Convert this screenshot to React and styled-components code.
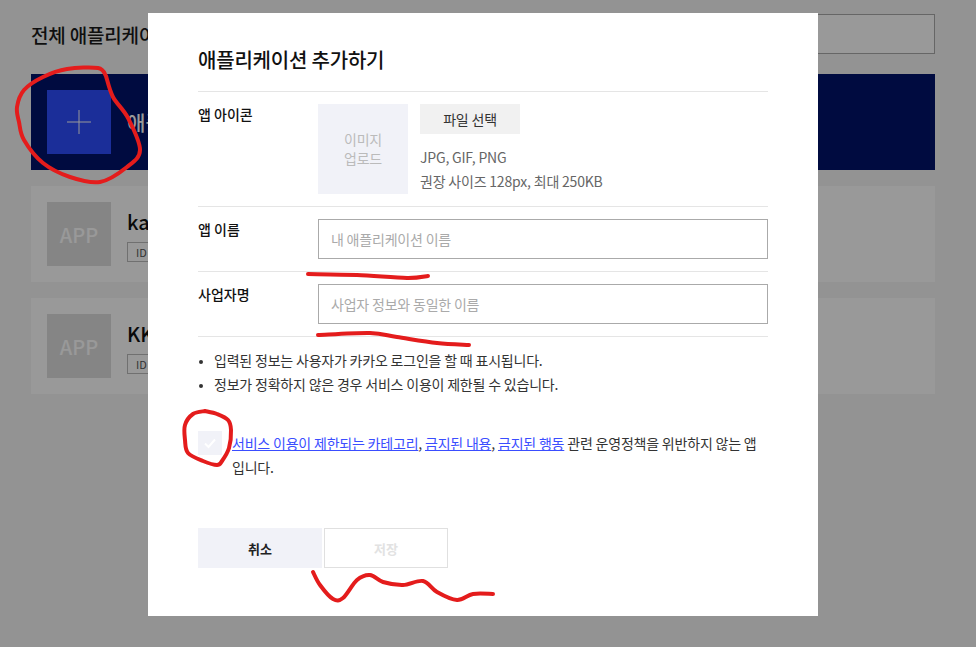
import React from "react";
import styled, { createGlobalStyle } from "styled-components";

const GlobalStyle = createGlobalStyle`
	html, body {
		margin: 0;
		padding: 0;
		height: 100%;
		background: #f5f6f5;
		font-family: "Noto Sans CJK KR", "Noto Sans", sans-serif;
		overflow: hidden;
	}
	* {
		box-sizing: border-box;
	}
`;

// hand-drawn marks on top of the screenshot, as point lists
const marks = [
	[[106, 76], [98, 68], [67, 69], [43, 77], [24, 90], [17, 107], [19, 122], [24, 140], [43, 163], [70, 177], [100, 182], [127, 167], [140, 150], [128, 118], [113, 97], [106, 76]],
	[[308, 274], [357, 275], [407, 278], [428, 276]],
	[[318, 335], [370, 333], [397, 337], [437, 343], [469, 345]],
	[[205, 411], [193, 414], [185, 425], [185, 440], [188, 453], [203, 461], [217, 465], [222, 461], [229, 448], [231, 430], [228, 420], [217, 414], [205, 411]],
	[[313, 572], [320, 585], [333, 599], [343, 598], [357, 580], [370, 575], [383, 582], [403, 585], [423, 581], [437, 592], [457, 600], [473, 594], [493, 594]],
];

// catmull-rom through the points, so the line passes where the marker went
const toPath = (pts) => {
	let d = `M${pts[0][0]} ${pts[0][1]}`;
	for (let i = 0; i < pts.length - 1; i++) {
		const p0 = pts[Math.max(i - 1, 0)];
		const p1 = pts[i];
		const p2 = pts[i + 1];
		const p3 = pts[Math.min(i + 2, pts.length - 1)];
		const c1x = p1[0] + (p2[0] - p0[0]) / 6;
		const c1y = p1[1] + (p2[1] - p0[1]) / 6;
		const c2x = p2[0] - (p3[0] - p1[0]) / 6;
		const c2y = p2[1] - (p3[1] - p1[1]) / 6;
		d += ` C${c1x} ${c1y} ${c2x} ${c2y} ${p2[0]} ${p2[1]}`;
	}
	return d;
};

const App = () => {
	return (
		<>
			<GlobalStyle />
			<Page>
				<TopRow>
					<PageTitle>전체 애플리케이션</PageTitle>
					<SearchBox />
				</TopRow>
				<AddBanner>
					<AddSquare>
						<svg width="24" height="24" viewBox="0 0 24 24">
							<path d="M12 0V24M0 12H24" stroke="#fff" strokeWidth="1" fill="none" />
						</svg>
					</AddSquare>
					<BannerText>애플리케이션 추가하기</BannerText>
				</AddBanner>
				<AppCard>
					<AppThumb>APP</AppThumb>
					<AppInfo>
						<AppName>kakao</AppName>
						<IdBadge>ID 000000</IdBadge>
					</AppInfo>
				</AppCard>
				<AppCard>
					<AppThumb>APP</AppThumb>
					<AppInfo>
						<AppName>KKO</AppName>
						<IdBadge>ID 000000</IdBadge>
					</AppInfo>
				</AppCard>
			</Page>
			<Dim>
				<Modal>
					<ModalTitle>애플리케이션 추가하기</ModalTitle>
					<FormRow>
						<Label>앱 아이콘</Label>
						<IconField>
							<UploadBox>
								이미지
								<br />
								업로드
							</UploadBox>
							<div>
								<FileButton>파일 선택</FileButton>
								<Hint>
									JPG, GIF, PNG
									<br />
									권장 사이즈 128px, 최대 250KB
								</Hint>
							</div>
						</IconField>
					</FormRow>
					<FormRow>
						<Label>앱 이름</Label>
						<TextInput placeholder="내 애플리케이션 이름" />
					</FormRow>
					<FormRow>
						<Label>사업자명</Label>
						<TextInput placeholder="사업자 정보와 동일한 이름" />
					</FormRow>
					<Notes>
						<li>입력된 정보는 사용자가 카카오 로그인을 할 때 표시됩니다.</li>
						<li>정보가 정확하지 않은 경우 서비스 이용이 제한될 수 있습니다.</li>
					</Notes>
					<Agree>
						<CheckBox>
							<svg width="14" height="14" viewBox="0 0 14 14">
								<path d="M2 7.5L5.5 11L12 3.5" stroke="#fff" strokeWidth="2" fill="none" />
							</svg>
						</CheckBox>
						<AgreeText>
							<a>서비스 이용이 제한되는 카테고리</a>, <a>금지된 내용</a>, <a>금지된 행동</a> 관련 운영정책을 위반하지 않는 앱 입니다.
						</AgreeText>
					</Agree>
					<Buttons>
						<CancelButton>취소</CancelButton>
						<SaveButton disabled>저장</SaveButton>
					</Buttons>
				</Modal>
			</Dim>
			<Marks viewBox="0 0 976 647">
				{marks.map((pts, i) => (
					<path key={i} d={toPath(pts)} />
				))}
			</Marks>
		</>
	);
};

const Page = styled.div`
	padding: 14px 41px 0 31px;
`;
const TopRow = styled.div`
	display: flex;
	align-items: center;
	justify-content: space-between;
	height: 40px;
	margin-bottom: 20px;
`;
const PageTitle = styled.h2`
	margin: 0;
	font-size: 19px;
	font-weight: 500;
	letter-spacing: -0.2px;
	color: #1a1a1a;
`;
const SearchBox = styled.div`
	width: 400px;
	height: 40px;
	background: #fff;
	border: 1px solid #aaa;
`;
const AddBanner = styled.div`
	display: flex;
	align-items: center;
	gap: 16px;
	height: 96px;
	padding: 16px;
	margin-bottom: 16px;
	background: #00136b;
`;
const AddSquare = styled.div`
	display: flex;
	align-items: center;
	justify-content: center;
	width: 64px;
	height: 64px;
	background: #2d4dff;
`;
const BannerText = styled.div`
	font-size: 20px;
	font-weight: 500;
	color: #fff;
`;
const AppCard = styled.div`
	display: flex;
	align-items: center;
	gap: 16px;
	height: 96px;
	padding: 16px;
	margin-bottom: 16px;
	background: #fff;
`;
const AppThumb = styled.div`
	display: flex;
	align-items: center;
	justify-content: center;
	width: 64px;
	height: 64px;
	background: #dedede;
	color: #fff;
	font-size: 20px;
	font-weight: 500;
`;
const AppInfo = styled.div`
	display: flex;
	flex-direction: column;
	align-items: flex-start;
	gap: 5px;
`;
const AppName = styled.div`
	font-size: 20px;
	font-weight: 500;
	line-height: 30px;
	color: #111;
`;
const IdBadge = styled.div`
	height: 20px;
	padding: 0 8px;
	border: 1px solid #bbb;
	font-size: 11px;
	line-height: 18px;
	color: #555;
`;
const Dim = styled.div`
	position: fixed;
	inset: 0;
	padding: 13px 0 0 148px;
	background: rgba(0, 0, 0, 0.4);
`;
const Modal = styled.div`
	width: 670px;
	height: 603px;
	padding: 30px 50px 0;
	background: #fff;
	letter-spacing: -0.2px;
`;
const ModalTitle = styled.h2`
	height: 49px;
	margin: 0;
	font-size: 20px;
	font-weight: 500;
	line-height: 34px;
	color: #111;
	border-bottom: 1px solid #e5e5e5;
`;
const FormRow = styled.div`
	display: grid;
	grid-template-columns: 120px 1fr;
	padding: 12px 0;
	border-bottom: 1px solid #e5e5e5;
`;
const Label = styled.div`
	font-size: 14px;
	font-weight: 500;
	line-height: 20px;
	letter-spacing: 0;
	color: #111;
`;
const IconField = styled.div`
	display: flex;
	gap: 12px;
`;
const UploadBox = styled.div`
	display: flex;
	align-items: center;
	justify-content: center;
	width: 90px;
	height: 90px;
	background: #f1f2f8;
	color: #bbb;
	font-size: 14px;
	line-height: 19px;
	text-align: center;
`;
const FileButton = styled.button`
	display: block;
	width: 100px;
	height: 30px;
	padding: 0;
	border: none;
	background: #f1f1f1;
	font-family: inherit;
	font-size: 14px;
	letter-spacing: inherit;
	color: #333;
`;
const Hint = styled.div`
	margin-top: 11px;
	font-size: 14px;
	line-height: 24px;
	color: #666;
`;
const TextInput = styled.input`
	width: 100%;
	height: 40px;
	padding: 0 12px;
	border: 1px solid #aaa;
	border-radius: 0;
	outline: none;
	font-family: inherit;
	font-size: 14px;
	letter-spacing: inherit;
	&::placeholder {
		color: #aaa;
		opacity: 1;
	}
`;
const Notes = styled.ul`
	margin: 11px 0 0;
	padding: 0 0 0 16px;
	font-size: 14px;
	line-height: 24px;
	color: #333;
	li::marker {
		font-size: 11px;
	}
`;
const Agree = styled.div`
	display: flex;
	gap: 10px;
	margin-top: 35px;
`;
const CheckBox = styled.div`
	display: flex;
	flex: none;
	align-items: center;
	justify-content: center;
	width: 24px;
	height: 24px;
	background: #f1f2f8;
`;
const AgreeText = styled.div`
	font-size: 14px;
	line-height: 24px;
	color: #333;
	a {
		color: #3a4dff;
		text-decoration: underline;
	}
`;
const Buttons = styled.div`
	display: flex;
	gap: 2px;
	margin-top: 49px;
`;
const CancelButton = styled.button`
	width: 124px;
	height: 40px;
	padding: 0;
	border: none;
	background: #f1f2f8;
	font-family: inherit;
	font-size: 13px;
	font-weight: 700;
	color: #222;
`;
const SaveButton = styled.button`
	width: 124px;
	height: 40px;
	padding: 0;
	border: 1px solid #e0e0e0;
	background: #fff;
	font-family: inherit;
	font-size: 13px;
	font-weight: 700;
	color: #e2e2e2;
`;
const Marks = styled.svg`
	position: fixed;
	top: 0;
	left: 0;
	width: 976px;
	height: 647px;
	pointer-events: none;
	path {
		fill: none;
		stroke: #e41c1c;
		stroke-width: 4;
		stroke-linecap: round;
		stroke-linejoin: round;
	}
`;

export default App;
